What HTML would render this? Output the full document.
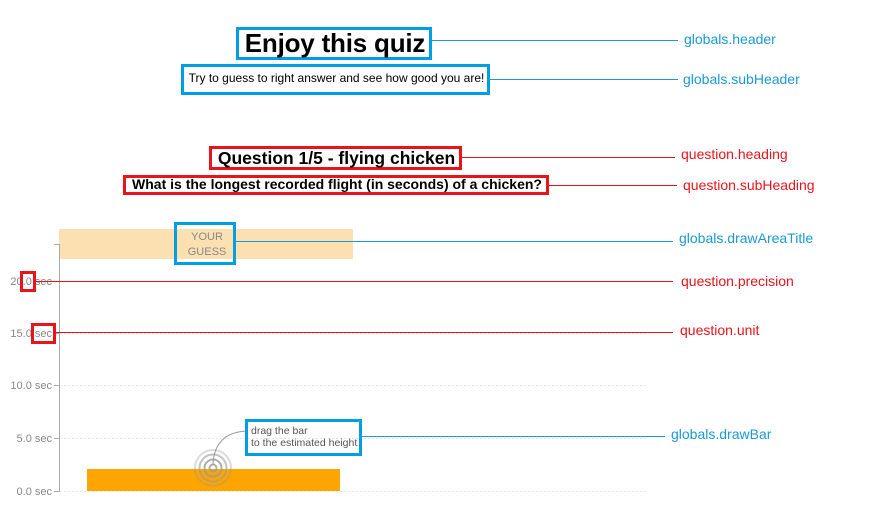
<!DOCTYPE html>
<html><head><meta charset="utf-8"><style>
body{margin:0;width:879px;height:510px;background:#fff;position:relative;overflow:hidden;font-family:"Liberation Sans",Arial,sans-serif}
.a{position:absolute;white-space:nowrap}
.lb{position:absolute;white-space:nowrap;font-family:"Liberation Sans",sans-serif;font-size:14px}
</style></head><body>
<svg class="a" style="left:0;top:0" width="879" height="510">
<g stroke="#e6e6e6" stroke-dasharray="2,2"><line x1="60" y1="281.5" x2="648" y2="281.5"/><line x1="60" y1="333.5" x2="648" y2="333.5"/><line x1="60" y1="385.5" x2="648" y2="385.5"/><line x1="60" y1="438.5" x2="648" y2="438.5"/><line x1="60" y1="491.5" x2="648" y2="491.5"/></g>
<rect x="59" y="229" width="294" height="30" fill="#fde0b2"/>
<g stroke="#aaa"><line x1="59.5" y1="244" x2="59.5" y2="492"/><line x1="54" y1="244.5" x2="60" y2="244.5"/><line x1="54" y1="281.5" x2="60" y2="281.5"/><line x1="54" y1="333.5" x2="60" y2="333.5"/><line x1="54" y1="385.5" x2="60" y2="385.5"/><line x1="54" y1="438.5" x2="60" y2="438.5"/><line x1="54" y1="491.5" x2="60" y2="491.5"/></g>
<g font-size="11" fill="#888" text-anchor="end"><text x="52" y="285">20.0 sec</text><text x="52" y="337">15.0 sec</text><text x="52" y="389">10.0 sec</text><text x="52" y="442">5.0 sec</text><text x="52" y="495">0.0 sec</text></g>
<text x="207" y="240" font-size="11" fill="#888" text-anchor="middle">YOUR</text>
<text x="207" y="255" font-size="11" fill="#888" text-anchor="middle">GUESS</text>
<rect x="87" y="469" width="253" height="22" fill="#ffa500"/>
<g fill="none" stroke="#999" stroke-opacity=".8" stroke-width="2"><circle cx="213" cy="468" r="3.5"/><circle cx="213" cy="468" r="8.5"/><circle cx="213" cy="468" r="13.5" stroke-opacity=".6"/><circle cx="213" cy="468" r="18" stroke-opacity=".35"/></g>
<path d="M213 465 Q214 433 246 431" fill="none" stroke="#999"/>
<text x="251" y="434" font-size="10.5" fill="#555">drag the bar</text>
<text x="251" y="446" font-size="10.5" fill="#555">to the estimated height</text>
<g stroke="#1a9ad6"><line x1="431" y1="40.5" x2="678" y2="40.5"/><line x1="489" y1="79.5" x2="678" y2="79.5"/><line x1="235" y1="241.5" x2="673" y2="241.5"/><line x1="361" y1="436.5" x2="665" y2="436.5"/></g>
<g stroke="#e8141c"><line x1="461" y1="157.5" x2="675" y2="157.5"/><line x1="548" y1="185.5" x2="677" y2="185.5"/><line x1="35" y1="281.5" x2="673" y2="281.5"/><line x1="55" y1="332.5" x2="673" y2="332.5"/></g>
<g fill="none" stroke-width="3"><rect x="237.5" y="28.5" width="193" height="30" stroke="#009fe3"/><rect x="182.5" y="65.5" width="306" height="28" stroke="#009fe3"/><rect x="175.5" y="223.5" width="59" height="40" stroke="#009fe3"/><rect x="246.5" y="420.5" width="114" height="34" stroke="#009fe3"/>
<rect x="210.5" y="147.5" width="250" height="21" stroke="#e8141c"/><rect x="124.5" y="176.5" width="423" height="17" stroke="#e8141c"/><rect x="21.5" y="272.5" width="13" height="18" stroke="#e8141c"/><rect x="32.5" y="324.5" width="22" height="18" stroke="#e8141c"/></g>
</svg>
<div class="a" style="left:237px;top:28px;width:196px;text-align:center;font-size:26px;font-weight:bold;line-height:31px;letter-spacing:-0.2px">Enjoy this quiz</div>
<div class="a" style="left:182px;top:65px;width:309px;text-align:center;font-size:12px;line-height:26px">Try to guess to right answer and see how good you are!</div>
<div class="a" style="left:210px;top:147px;width:253px;text-align:center;font-size:17.5px;font-weight:bold;line-height:22px">Question 1/5 - flying chicken</div>
<div class="a" style="left:124px;top:176px;width:426px;text-align:center;font-size:14px;font-weight:bold;line-height:17px">What is the longest recorded flight (in seconds) of a chicken?</div>
<div class="lb" style="left:684px;top:31px;color:#1a9ad6">globals.header</div>
<div class="lb" style="left:683px;top:71px;color:#1a9ad6">globals.subHeader</div>
<div class="lb" style="left:681px;top:146px;color:#e8141c">question.heading</div>
<div class="lb" style="left:683px;top:177px;color:#e8141c">question.subHeading</div>
<div class="lb" style="left:679px;top:230px;color:#1a9ad6">globals.drawAreaTitle</div>
<div class="lb" style="left:681px;top:273px;color:#e8141c">question.precision</div>
<div class="lb" style="left:680px;top:322px;color:#e8141c">question.unit</div>
<div class="lb" style="left:671px;top:426px;color:#1a9ad6">globals.drawBar</div>
</body></html>
